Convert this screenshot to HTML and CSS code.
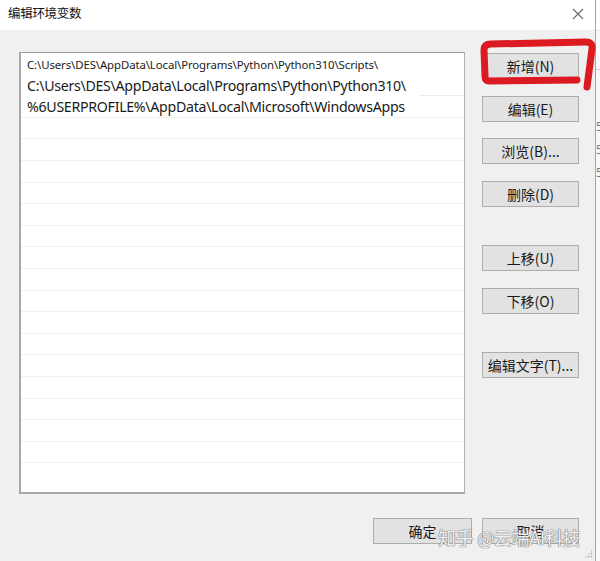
FILE: index.html
```
<!DOCTYPE html>
<html lang="zh-CN">
<head>
<meta charset="utf-8">
<title>编辑环境变数</title>
<link rel="stylesheet" href="styles.css">
</head>
<body>
<div class="page">
  <div class="window">
    <div class="titlebar">
      <span class="title">编辑环境变数</span>
      <svg class="close" width="12" height="12" viewBox="0 0 12 12"><path d="M1 1 L11 11 M11 1 L1 11" stroke="#6b6b6b" stroke-width="1.1" fill="none"/></svg>
    </div>
    <div class="body">
      <div class="main">
        <div class="list">
          <div class="row small">C:\Users\DES\AppData\Local\Programs\Python\Python310\Scripts\</div>
          <div class="row big partial">C:\Users\DES\AppData\Local\Programs\Python\Python310\</div>
          <div class="row big">%6USERPROFILE%\AppData\Local\Microsoft\WindowsApps</div>
          <div class="row"></div><div class="row"></div><div class="row"></div><div class="row"></div>
          <div class="row"></div><div class="row"></div><div class="row"></div><div class="row"></div>
          <div class="row"></div><div class="row"></div><div class="row"></div><div class="row"></div>
          <div class="row"></div><div class="row"></div><div class="row"></div><div class="row"></div>
        </div>
        <div class="buttons">
          <button class="btn">新增(N)</button>
          <button class="btn">编辑(E)</button>
          <button class="btn">浏览(B)...</button>
          <button class="btn">删除(D)</button>
          <button class="btn sep">上移(U)</button>
          <button class="btn">下移(O)</button>
          <button class="btn sep">编辑文字(T)...</button>
        </div>
      </div>
      <div class="footer">
        <button class="btn ok">确定</button>
        <button class="btn">取消</button>
      </div>
    </div>
  </div>
  <div class="strip">
    <div class="strip-top"></div>
    <div class="strip-line"></div>
    <div class="frag">5</div>
    <div class="frag">5</div>
    <div class="frag">5</div>
  </div>
  <div class="watermark">知乎 @云端AI科技</div>
  <svg class="mark" width="600" height="561" viewBox="0 0 600 561">
    <path d="M577 80 L489 81 Q485 81 485 76 L484 50 Q484 44 491 44 L586 42 Q593 42 592 49 L587 87" stroke="#dc1a22" stroke-width="7" fill="none" stroke-linecap="round" stroke-linejoin="round"/>
  </svg>
  <div class="grip"></div>
</div>
</body>
</html>
```
FILE: styles.css
```
html, body {
  margin: 0;
  padding: 0;
}
body {
  width: 600px;
  height: 561px;
  overflow: hidden;
  background: #f8f8f8;
  font-family: "Noto Sans CJK SC", sans-serif;
  color: #1a1a1a;
}
.page {
  position: relative;
  display: flex;
  width: 600px;
  height: 561px;
}
.window {
  width: 595px;
  height: 561px;
  border-right: 1px solid #a4a4a4;
  display: flex;
  flex-direction: column;
  background: #f0f0f0;
}
.titlebar {
  height: 30px;
  background: #ffffff;
  display: flex;
  align-items: center;
  justify-content: space-between;
  padding: 0 11px 5px 8px;
  box-sizing: border-box;
}
.title {
  font-size: 12.5px;
  color: #111;
  letter-spacing: -0.3px;
}
.close {
  display: block;
  margin-top: 2px;
}
.body {
  flex: 1;
  display: flex;
  flex-direction: column;
  padding: 22px 16px 0 19px;
}
.main {
  display: flex;
  gap: 17px;
}
.list {
  width: 446px;
  height: 442px;
  box-sizing: border-box;
  background: #ffffff;
  border-top: 1px solid #9c9c9c;
  border-left: 2px solid #a8a8a8;
  border-right: 1px solid #b0b0b0;
  border-bottom: 2px solid #a8a8a8;
  overflow: hidden;
}
.row {
  height: 21.6px;
  box-sizing: border-box;
  border-bottom: 1px solid #efefef;
  padding-left: 6px;
  white-space: nowrap;
  font-family: "Noto Sans", sans-serif;
  display: flex;
  align-items: center;
}
.row.small {
  font-size: 11.4px;
  border-bottom: none;
  letter-spacing: -0.1px;
  padding-top: 2px;
}
.row.big {
  font-size: 14.2px;
  letter-spacing: -0.3px;
  padding-top: 1px;
}
.row.partial {
  border-bottom: none;
  background: linear-gradient(#ececec, #ececec) right bottom / 44px 1px no-repeat;
}
.buttons {
  display: flex;
  flex-direction: column;
  gap: 16.7px;
  padding-top: 1px;
}
.btn {
  width: 97px;
  height: 26px;
  box-sizing: border-box;
  background: #e2e2e2;
  border: 1px solid #adadad;
  border-radius: 0;
  font-family: "Noto Sans CJK SC", sans-serif;
  font-size: 14px;
  color: #1a1a1a;
  padding: 0;
  line-height: 22px;
}
.btn.sep {
  margin-top: 21.2px;
}
.footer {
  display: flex;
  justify-content: flex-end;
  gap: 10px;
  margin-top: 24px;
}
.btn.ok {
  width: 99px;
}
.strip {
  flex: 1;
  display: flex;
  flex-direction: column;
  overflow: hidden;
  background: #f9f9f9;
}
.strip-top {
  height: 30px;
  background: #fff;
  border-bottom: 1px solid #e4e4e4;
  flex: none;
}
.strip-line {
  height: 38px;
  border-bottom: 1px solid #cfcfcf;
  flex: none;
  margin-bottom: 48px;
}
.frag {
  font-family: "Noto Sans", sans-serif;
  font-size: 12px;
  color: #777;
  height: 23px;
  line-height: 18px;
}
.watermark {
  position: absolute;
  left: 438px;
  top: 525px;
  font-family: "Noto Sans CJK SC", sans-serif;
  font-size: 18px;
  line-height: 24px;
  color: rgba(255, 255, 255, 0.92);
  letter-spacing: -0.3px;
  text-shadow: 0 0 1px #7a7a7a, 0 0 1px #7a7a7a, 0 0 1px #7a7a7a;
}
.mark {
  position: absolute;
  left: 0;
  top: 0;
  pointer-events: none;
}
.grip {
  position: absolute;
  left: 584px;
  top: 549px;
  width: 9px;
  height: 9px;
  background: radial-gradient(circle, #b5b5b5 0.8px, transparent 1.2px) 0 0 / 3px 3px;
  clip-path: polygon(100% 0, 100% 100%, 0 100%);
}
```
